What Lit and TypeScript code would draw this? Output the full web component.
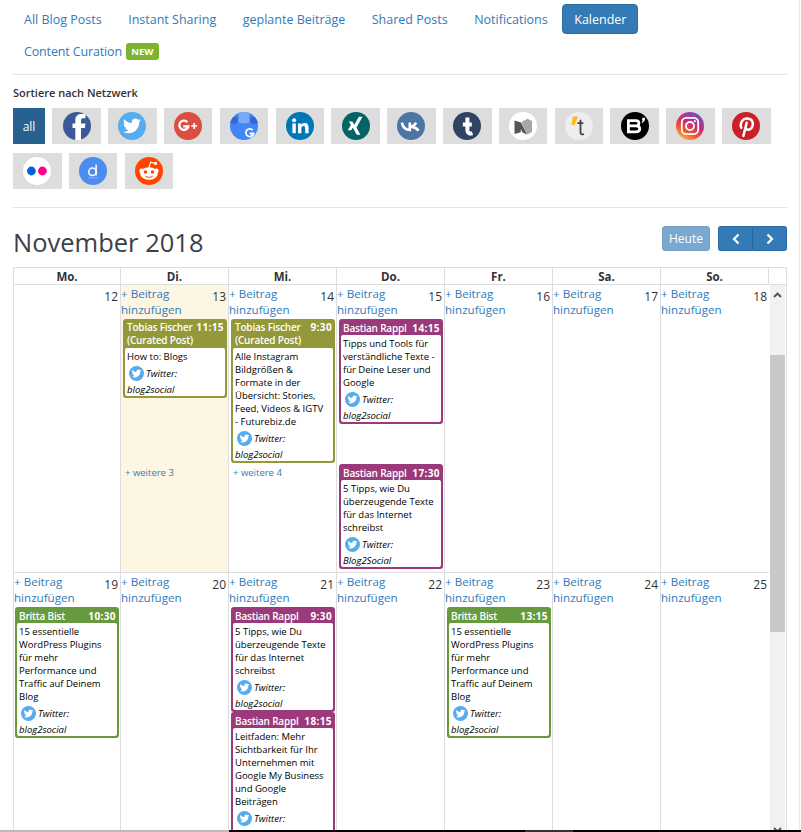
import { LitElement, html, css, svg } from "lit";
import { customElement } from "lit/decorators.js";

const circle = (c: string) => svg`<circle cx="14" cy="14" r="14" fill="${c}"/>`;
const bird = (size: number, x: number, y: number) => svg`<g transform="translate(${x} ${y}) scale(${size / 24})"><path fill="#fff" d="M23.953 4.57a10 10 0 01-2.825.775 4.958 4.958 0 002.163-2.723c-.951.555-2.005.959-3.127 1.184a4.92 4.92 0 00-8.384 4.482C7.69 8.095 4.067 6.13 1.64 3.162a4.822 4.822 0 00-.666 2.475c0 1.71.87 3.213 2.188 4.096a4.904 4.904 0 01-2.228-.616v.06a4.923 4.923 0 003.946 4.827 4.996 4.996 0 01-2.212.085 4.936 4.936 0 004.604 3.417 9.867 9.867 0 01-6.102 2.105c-.39 0-.779-.023-1.17-.067a13.995 13.995 0 007.557 2.209c9.053 0 13.998-7.496 13.998-13.985 0-.21 0-.42-.015-.63A9.935 9.935 0 0024 4.59z"/></g>`;

const ICONS: Record<string, unknown> = {
  facebook: svg`${circle("#3b5998")}<path fill="#fff" d="M12.300 28.500V16H9.500V11.500H12.300V8C12.300 3.800 15 2 18.500 2C20 2 21.500 2.200 22.500 2.300V6.200H20C18.500 6.200 18 7 18 8.500V11.500H22.500L21.800 16H18V28.500Z"/>`,
  twitter: svg`${circle("#55acee")}${bird(18, 5, 5)}`,
  gplus: svg`${circle("#dc4e41")}
    <path fill="none" stroke="#fff" stroke-width="2.300" d="M13.400 10.200a4.600 4.600 0 1 0 1 4.200H9.200"/>
    <path stroke="#fff" stroke-width="1.700" d="M17.200 14h6M20.200 11v6"/>`,
  gmb: svg`${circle("#4285f4")}
    <path fill="#3367d6" d="M3.200 5h21.600c1.700 2 2.600 3.600 3 5.600C25 13 21.500 12 20 9.800C18 12 10 12 8 9.800C6.500 12 3 13 .3 10.600C.8 8.600 1.700 6.800 3.200 5z"/>
    <path fill="#7baaf7" d="M9 .8a14 14 0 0 1 10 0L20 9.800C18 12 10 12 8 9.800z"/>
    <path fill="none" stroke="#fff" stroke-width="1.800" d="M22.800 18.200a3.900 3.900 0 1 0 .8 3.300h-4"/>`,
  linkedin: svg`${circle("#0077b5")}
    <rect x="6.400" y="11.400" width="3.400" height="9.800" fill="#fff"/><circle cx="8.100" cy="8.200" r="2" fill="#fff"/>
    <path fill="#fff" d="M12 11.400h3.200v1.400c.6-1 1.900-1.700 3.400-1.700 3.100 0 4 2 4 4.900v5.200h-3.400v-4.700c0-1.400-.3-2.600-1.800-2.600s-2 1.100-2 2.600v4.700H12z"/>`,
  xing: svg`${circle("#026466")}
    <path fill="#fff" d="M6.800 9.400h3.500l2.100 3.500-3.200 5.400H5.700l3.200-5.400zM16.800 4.800h3.700l-6 10.600 3.900 7.400h-3.700l-3.900-7.400z"/>`,
  vk: svg`${circle("#4c75a3")}
    <path fill="none" stroke="#fff" stroke-width="2.600" d="M4.800 10.600c1.200 4.800 4 7.400 8 7.400v-7.400M13 14.600c2.800 0 4.900-1.700 6-4M13.800 14.600c3 .2 5.400 1.300 7.800 4"/>`,
  tumblr: svg`${circle("#2f4463")}
    <path fill="none" stroke="#fff" stroke-width="4" d="M14.400 5.400v12.800c0 3.200 2.400 4 5 3M9.800 12.600h9"/>`,
  medium: svg`${circle("#fff")}
    <path fill="#a3a8a8" d="M12.500 10L18.500 6.800L23 9V20L18 22.500z"/>
    <path fill="#565656" d="M5.500 8.500L12 10.500L18 22.500L13.500 20.500L11.800 17V20.300L5.500 22z"/>`,
  torial: svg`${circle("#eeeeee")}
    <path fill="#fdb913" d="M7.800 4.400h5.300l-3.600 8.600H6.600z"/>
    <path fill="none" stroke="#444" stroke-width="1.800" d="M15.500 7.800v12.500c0 1.900 1.300 2.500 3.400 1.800M12.400 11.200h6"/>`,
  bloglovin: svg`${circle("#000")}
    <path fill="none" stroke="#fff" stroke-width="2.800" d="M7.400 8.600h7.600c3.800 0 3.800 5.200 0 5.200H7.400M15 13.800c5 0 5 6 0 6H7.400M7.400 7.200v14"/>
    <path fill="#fff" d="M21.200 5.800h3l-.6 3-2.200 2.200-.7-.6 1.100-1.800h-.6z"/>`,
  instagram: svg`<defs><linearGradient id="ig" x1="0.2" y1="1" x2="0.8" y2="0"><stop offset="0" stop-color="#fdc04d"/><stop offset=".3" stop-color="#f1592b"/><stop offset=".6" stop-color="#c9287f"/><stop offset="1" stop-color="#5b5fc7"/></linearGradient></defs>
    <circle cx="14" cy="14" r="14" fill="url(#ig)"/>
    <rect x="5.800" y="5.800" width="16.400" height="16.400" rx="4.500" fill="none" stroke="#fff" stroke-width="1.800"/>
    <circle cx="14" cy="14" r="4" fill="none" stroke="#fff" stroke-width="1.800"/><circle cx="18.800" cy="9.200" r="1.100" fill="#fff"/>`,
  pinterest: svg`${circle("#cb2027")}
    <path fill="none" stroke="#fff" stroke-width="2.500" stroke-linecap="round" d="M9.300 15.800C7.400 11 10.800 6.500 15 6.500c4.600 0 6.800 3.600 5.500 7.700-1.100 3.600-5 4.600-6.500 2.300M14.700 10.800L11.400 24"/>`,
  flickr: svg`${circle("#fff")}<circle cx="8.400" cy="14" r="4.400" fill="#0063dc"/><circle cx="19.400" cy="14" r="4.400" fill="#ff0084"/>`,
  diigo: svg`${circle("#4a8cf0")}
    <circle cx="13.400" cy="14.800" r="3.700" fill="none" stroke="#fff" stroke-width="1.500"/>
    <path stroke="#fff" stroke-width="1.500" d="M17.100 7.600v11"/><path stroke="#c9b27a" stroke-width=".9" d="M9 20.800h10"/>`,
  reddit: svg`${circle("#ff4500")}
    <path fill="none" stroke="#fff" stroke-width="1.100" d="M14 10.500l1.500-5.300 4.300 1"/><circle cx="20.500" cy="6.400" r="1.600" fill="#fff"/>
    <circle cx="6.600" cy="13.800" r="2.300" fill="#fff"/><circle cx="21.400" cy="13.800" r="2.300" fill="#fff"/>
    <ellipse cx="14" cy="16.500" rx="8.800" ry="6.300" fill="#fff"/>
    <circle cx="10.500" cy="15" r="1.700" fill="#ff4500"/><circle cx="17.500" cy="15" r="1.700" fill="#ff4500"/>
    <path fill="none" stroke="#ff4500" stroke-width="1" d="M10.300 19.200c2 1.500 5.400 1.500 7.400 0"/>`,
};

const NETS = ["facebook","twitter","gplus","gmb","linkedin","xing","vk","tumblr","medium","torial","bloglovin","instagram","pinterest","flickr","diigo","reddit"];
const TABS = ["All Blog Posts","Instant Sharing","geplante Beiträge","Shared Posts","Notifications"];
const DAYS = ["Mo.","Di.","Mi.","Do.","Fr.","Sa.","So."];

type Ev = { color: string; who: string; time: string; curated?: boolean; text: string[]; account: string };
type Cell = { n: number; add?: boolean; today?: boolean; a?: Ev[]; b?: Ev[]; more?: string };

const TWO = ["5 Tipps, wie Du","überzeugende Texte","für das Internet","schreibst"];
const WP = ["15 essentielle","WordPress Plugins","für mehr","Performance und","Traffic auf Deinem","Blog"];

const WEEKS: Cell[][] = [
  [
    { n: 12 },
    { n: 13, add: true, today: true, more: "+ weitere 3", a: [{ color: "olive", who: "Tobias Fischer", time: "11:15", curated: true, text: ["How to: Blogs"], account: "blog2social" }] },
    { n: 14, add: true, more: "+ weitere 4", a: [{ color: "olive", who: "Tobias Fischer", time: "9:30", curated: true, text: ["Alle Instagram","Bildgrößen &","Formate in der","Übersicht: Stories,","Feed, Videos & IGTV","- Futurebiz.de"], account: "blog2social" }] },
    { n: 15, add: true,
      a: [{ color: "magenta", who: "Bastian Rappl", time: "14:15", text: ["Tipps und Tools für","verständliche Texte -","für Deine Leser und","Google"], account: "blog2social" }],
      b: [{ color: "magenta", who: "Bastian Rappl", time: "17:30", text: TWO, account: "Blog2Social" }] },
    { n: 16, add: true }, { n: 17, add: true }, { n: 18, add: true },
  ],
  [
    { n: 19, add: true, a: [{ color: "green", who: "Britta Bist", time: "10:30", text: WP, account: "blog2social" }] },
    { n: 20, add: true },
    { n: 21, add: true, a: [
      { color: "magenta", who: "Bastian Rappl", time: "9:30", text: TWO, account: "blog2social" },
      { color: "magenta", who: "Bastian Rappl", time: "18:15", text: ["Leitfaden: Mehr","Sichtbarkeit für Ihr","Unternehmen mit","Google My Business","und Google","Beiträgen"], account: "" },
    ] },
    { n: 22, add: true },
    { n: 23, add: true, a: [{ color: "green", who: "Britta Bist", time: "13:15", text: WP, account: "blog2social" }] },
    { n: 24, add: true }, { n: 25, add: true },
  ],
];

@customElement("app-root")
export class AppRoot extends LitElement {
  static styles = css`
    :host { display: block; position: relative; width: 801px; height: 832px; overflow: hidden; background: #fff;
      font-family: "Open Sans", "Noto Sans", sans-serif; color: #333; font-size: 12px; }
    * { box-sizing: border-box; }
    a { color: #337ab7; text-decoration: none; }
    .page { padding: 4px 14px 0 13px; }
    .nav { display: flex; flex-wrap: wrap; row-gap: 1px; column-gap: 2.500px; margin-left: -1px; margin-bottom: 8px; }
    .pill { display: flex; align-items: center; height: 30px; padding: 0 12px; font-size: 12.500px; color: #337ab7; border-radius: 4px; }
    .pill.active { background: #337ab7; color: #fff; border: 1px solid #2e6da4; width: 76px; padding: 0 11px; }
    .pill.curation { letter-spacing: -.15px; }
    .break { flex-basis: 100%; height: 0; margin-top: -1px; }
    .new { margin-left: 4px; background: #7cb32f; color: #fff; font-weight: 700; font-size: 9.500px; line-height: 17px; height: 17px; width: 33px; text-align: center; border-radius: 3px; letter-spacing: 0; }
    hr { border: 0; height: 1px; background: #e3e3e3; margin: 0; }
    .sort { font-weight: 600; font-size: 11px; line-height: 16px; margin: 10px 0 7px; color: #333; }
    .tiles { display: flex; flex-wrap: wrap; gap: 9px 7.300px; margin-bottom: 18px; }
    .tile { width: 48.530px; height: 36px; background: #ddd; display: flex; align-items: center; justify-content: center; }
    .tile svg { width: 28px; height: 28px; display: block; }
    .all { width: 32px; background: #286090; color: #fff; font-size: 12px; }
    .toolbar { display: flex; justify-content: space-between; padding-top: 18px; height: 43px; margin-bottom: 16px; }
    h2 { margin: -1px 0 0; font-weight: 400; font-size: 25.500px; line-height: 34px; color: #3c4046; }
    .btns { display: flex; gap: 8px; height: 25px; }
    .btn { background: #337ab7; border: 1px solid #2e6da4; color: #fff; border-radius: 3px; height: 25px; display: flex; align-items: center; justify-content: center; font-size: 12px; }
    .today { width: 48px; opacity: .65; }
    .split { display: flex; }
    .split .btn { width: 35px; }
    .split .btn:first-child { border-radius: 3px 0 0 3px; border-right-color: #2a6496; }
    .split .btn:last-child { border-radius: 0 3px 3px 0; border-left: 0; width: 34px; }
    .btn svg { width: 10px; height: 12px; display: block; }
    .cal { border: 1px solid #ddd; border-bottom: 0; }
    .head { display: grid; grid-template-columns: 107px repeat(6, 108px) 1fr; height: 17px; border-bottom: 1px solid #ddd; }
    .head div { border-right: 1px solid #ddd; text-align: center; font-weight: 700; font-size: 11.500px; line-height: 17px; color: #333; }
    .head div:last-child { border-right: 0; }
    .body { display: flex; }
    .weeks { width: 755px; flex: none; }
    .week { display: grid; grid-template-columns: 107px repeat(6, 108px); border-bottom: 1px solid #ddd; }
    .week.first { height: 288px; }
    .week.second { height: 262px; border-bottom: 0; }
    .cell { border-right: 1px solid #ddd; display: grid; grid-template-rows: 34px 145px 1fr; overflow: hidden; min-width: 0; }
    .cell:last-child { border-right: 0; }
    .cell.now { background: #fdf6e3; }
    .top { padding: 1px 0 0 0; line-height: 16px; font-size: 11.600px; }
    .num { float: right; padding: 3px 2px 0 0; color: #333; font-size: 12px; line-height: 16px; }
    .slot { padding: 0 1px 0 2px; min-width: 0; }
    .cell:first-child .slot { padding-left: 1px; }
    .second .cell { grid-template-rows: 34px 1fr; }
    .more { font-size: 9.500px; line-height: 14px; padding: 2px 0 0 2px; color: #337ab7; }
    .ev { border: 2px solid var(--c); border-radius: 3px; background: var(--c); font-size: 9.500px; line-height: 13px; color: #000; overflow: hidden; }
    .olive { --c: #93983a; }
    .magenta { --c: #9b3a7a; }
    .green { --c: #679a3e; }
    .eh { color: #fff; font-weight: 600; font-size: 10px; letter-spacing: -.2px; padding: 0 1px 0 2px; line-height: 14px; }
    .eh.two { line-height: 13px; padding-bottom: 1px; }
    .ehr { display: flex; justify-content: space-between; white-space: nowrap; }
    .ehr span:last-child { font-weight: 700; letter-spacing: .4px; }
    .eb { background: #fff; border-radius: 2px; padding: 2px 2px 0; }
    .eb p { margin: 0; white-space: nowrap; }
    .net { font-style: italic; height: 33px; padding-top: 2px; }
    .net span { display: flex; align-items: center; height: 16px; white-space: nowrap; }
    .net svg { width: 15px; height: 15px; margin: 0 2px 0 2px; flex: none; }
    .sb { width: 15px; margin-left: 1px; background: #f1f1f1; position: relative; }
    .thumb { position: absolute; left: 0; right: 0; top: 70px; height: 277px; background: #c8c8c8; }
    .chev { position: absolute; left: 3px; width: 9px; height: 6px; }
    .up { top: 7px; }
    .down { bottom: 2px; }
    .edge { position: absolute; top: 0; bottom: 0; right: 1px; width: 1px; background: #e8e8e8; }
    .foot { position: absolute; left: 0; right: 0; bottom: 0; height: 2px; display: flex; }
    .foot i { display: block; height: 100%; }
    .f1 { width: 229px; background: #bbb; }
    .f2 { width: 296px; background: #000; }
    .f3 { width: 48px; background: #333; }
    .f4 { flex: 1; background: #000; }
  `;

  private ev(e: Ev) {
    return html`<div class="ev ${e.color}">
      <div class="eh ${e.curated ? "two" : ""}">
        <div class="ehr"><span>${e.who}</span><span>${e.time}</span></div>
        ${e.curated ? html`<div>(Curated Post)</div>` : ""}
      </div>
      <div class="eb">
        ${e.text.map((t) => html`<p>${t}</p>`)}
        <div class="net">
          <span><svg viewBox="0 0 28 28">${ICONS.twitter}</svg>Twitter:</span>
          ${e.account ? html`<span>${e.account}</span>` : ""}
        </div>
      </div>
    </div>`;
  }

  private cell(c: Cell) {
    return html`<div class="cell ${c.today ? "now" : ""}">
      <div class="top"><span class="num">${c.n}</span>${c.add ? html`<a>+ Beitrag hinzufügen</a>` : ""}</div>
      <div class="slot">${(c.a ?? []).map((e) => this.ev(e))}</div>
      ${c.b || c.more ? html`<div class="slot">
        ${(c.b ?? []).map((e) => this.ev(e))}
        ${c.more ? html`<div class="more">${c.more}</div>` : ""}
      </div>` : ""}
    </div>`;
  }

  render() {
    return html`<div class="page">
        <div class="nav">
          ${TABS.map((t) => html`<a class="pill">${t}</a>`)}
          <a class="pill active">Kalender</a>
          <div class="break"></div>
          <a class="pill curation">Content Curation<span class="new">NEW</span></a>
        </div>
        <hr />
        <div class="sort">Sortiere nach Netzwerk</div>
        <div class="tiles">
          <div class="tile all">all</div>
          ${NETS.map((n) => html`<div class="tile"><svg viewBox="0 0 28 28">${ICONS[n]}</svg></div>`)}
        </div>
        <hr />
        <div class="toolbar">
          <h2>November 2018</h2>
          <div class="btns">
            <div class="btn today">Heute</div>
            <div class="split">
              <div class="btn"><svg viewBox="0 0 10 12"><path d="M7.500 1.500L3 6l4.500 4.500" fill="none" stroke="#fff" stroke-width="2.200"/></svg></div>
              <div class="btn"><svg viewBox="0 0 10 12"><path d="M2.500 1.500L7 6l-4.500 4.500" fill="none" stroke="#fff" stroke-width="2.200"/></svg></div>
            </div>
          </div>
        </div>
        <div class="cal">
          <div class="head">${DAYS.map((d) => html`<div>${d}</div>`)}<div></div></div>
          <div class="body">
            <div class="weeks">
              ${WEEKS.map((w, i) => html`<div class="week ${i === 0 ? "first" : "second"}">${w.map((c) => this.cell(c))}</div>`)}
            </div>
            <div class="sb">
              <svg class="chev up" viewBox="0 0 9 6"><path d="M1 5l3.500-3.500L8 5" fill="none" stroke="#505050" stroke-width="1.800"/></svg>
              <div class="thumb"></div>
              <svg class="chev down" viewBox="0 0 9 6"><path d="M1 1l3.500 3.500L8 1" fill="none" stroke="#505050" stroke-width="1.800"/></svg>
            </div>
          </div>
        </div>
      </div>
      <div class="edge"></div>
      <div class="foot"><i class="f1"></i><i class="f2"></i><i class="f3"></i><i class="f4"></i></div>`;
  }
}
